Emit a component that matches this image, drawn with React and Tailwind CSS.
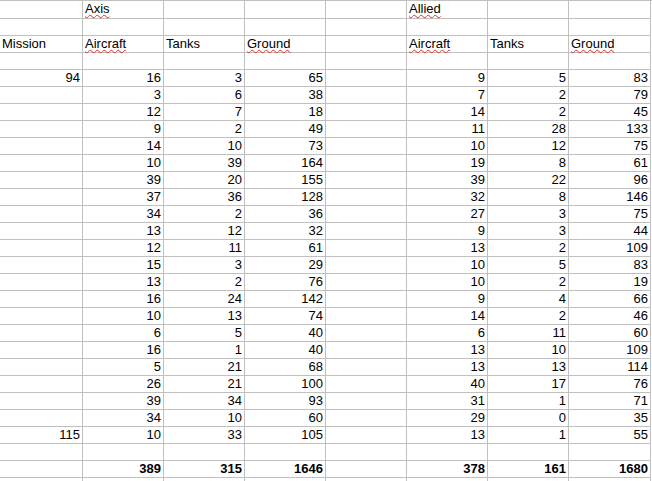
const cols = ['w-[83px]', 'w-[81px]', 'w-[81px]', 'w-[81px]', 'w-[81px]', 'w-[81px]', 'w-[81px]', 'w-[82px]']

const data = [
  [94, 16, 3, 65, '', 9, 5, 83],
  ['', 3, 6, 38, '', 7, 2, 79],
  ['', 12, 7, 18, '', 14, 2, 45],
  ['', 9, 2, 49, '', 11, 28, 133],
  ['', 14, 10, 73, '', 10, 12, 75],
  ['', 10, 39, 164, '', 19, 8, 61],
  ['', 39, 20, 155, '', 39, 22, 96],
  ['', 37, 36, 128, '', 32, 8, 146],
  ['', 34, 2, 36, '', 27, 3, 75],
  ['', 13, 12, 32, '', 9, 3, 44],
  ['', 12, 11, 61, '', 13, 2, 109],
  ['', 15, 3, 29, '', 10, 5, 83],
  ['', 13, 2, 76, '', 10, 2, 19],
  ['', 16, 24, 142, '', 9, 4, 66],
  ['', 10, 13, 74, '', 14, 2, 46],
  ['', 6, 5, 40, '', 6, 11, 60],
  ['', 16, 1, 40, '', 13, 10, 109],
  ['', 5, 21, 68, '', 13, 13, 114],
  ['', 26, 21, 100, '', 40, 17, 76],
  ['', 39, 34, 93, '', 31, 1, 71],
  ['', 34, 10, 60, '', 29, 0, 35],
  [115, 10, 33, 105, '', 13, 1, 55],
]

// red squiggle from the spell checker
function Check({ children }) {
  return (
    <span className="underline decoration-wavy decoration-[#e0302a] decoration-1 underline-offset-[1px]">
      {children}
    </span>
  )
}

function Row({ cells, first, bold, left }) {
  return (
    <div className={`flex ${first ? 'h-[19px] border-t' : 'h-[17px]'} border-[#c0c0c0]`}>
      {cols.map((w, i) => {
        const c = cells ? cells[i] : ''
        const isText = typeof c === 'object' && c !== null
        return (
          <div
            key={i}
            className={`${w} shrink-0 border-r border-b border-[#c0c0c0] leading-4 whitespace-nowrap ${
              left || isText ? 'text-left pl-[2px]' : 'text-right pr-[2px]'
            } ${bold ? 'font-bold' : ''}`}
          >
            {c}
          </div>
        )
      })}
    </div>
  )
}

export default function App() {
  return (
    <div className="w-[652px] h-[481px] overflow-hidden bg-white text-black text-[13px] font-['Liberation_Sans',Arial,sans-serif]">
      <Row first left cells={['', <Check>Axis</Check>, '', '', '', <Check>Allied</Check>, '', '']} />
      <Row />
      <Row
        left
        cells={[
          'Mission',
          <Check>Aircraft</Check>,
          'Tanks',
          <Check>Ground</Check>,
          '',
          <Check>Aircraft</Check>,
          'Tanks',
          <Check>Ground</Check>,
        ]}
      />
      <Row />
      {data.map((r, i) => (
        <Row key={i} cells={r} />
      ))}
      <Row />
      <Row bold cells={['', 389, 315, 1646, '', 378, 161, 1680]} />
      <Row />
    </div>
  )
}
